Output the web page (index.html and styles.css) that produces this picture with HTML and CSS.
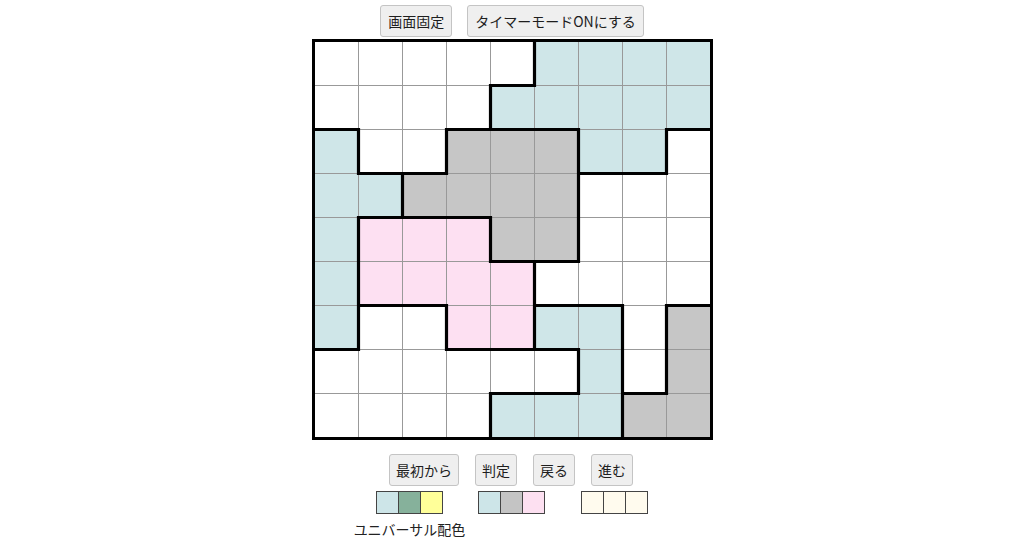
FILE: index.html
```html
<!DOCTYPE html>
<html lang="ja">
<head>
<meta charset="utf-8">
<title>パズル</title>
<link rel="stylesheet" href="styles.css">
</head>
<body>
<div class="page">
  <div class="toolbar top">
    <button class="btn">画面固定</button>
    <button class="btn">タイマーモードONにする</button>
  </div>
  <div class="board">
    <div class="cells">
      <div class="c w"></div><div class="c w"></div><div class="c w"></div><div class="c w"></div><div class="c w"></div><div class="c b"></div><div class="c b"></div><div class="c b"></div><div class="c b"></div>
      <div class="c w"></div><div class="c w"></div><div class="c w"></div><div class="c w"></div><div class="c b"></div><div class="c b"></div><div class="c b"></div><div class="c b"></div><div class="c b"></div>
      <div class="c b"></div><div class="c w"></div><div class="c w"></div><div class="c g"></div><div class="c g"></div><div class="c g"></div><div class="c b"></div><div class="c b"></div><div class="c w"></div>
      <div class="c b"></div><div class="c b"></div><div class="c g"></div><div class="c g"></div><div class="c g"></div><div class="c g"></div><div class="c w"></div><div class="c w"></div><div class="c w"></div>
      <div class="c b"></div><div class="c p"></div><div class="c p"></div><div class="c p"></div><div class="c g"></div><div class="c g"></div><div class="c w"></div><div class="c w"></div><div class="c w"></div>
      <div class="c b"></div><div class="c p"></div><div class="c p"></div><div class="c p"></div><div class="c p"></div><div class="c w"></div><div class="c w"></div><div class="c w"></div><div class="c w"></div>
      <div class="c b"></div><div class="c w"></div><div class="c w"></div><div class="c p"></div><div class="c p"></div><div class="c b"></div><div class="c b"></div><div class="c w"></div><div class="c g"></div>
      <div class="c w"></div><div class="c w"></div><div class="c w"></div><div class="c w"></div><div class="c w"></div><div class="c w"></div><div class="c b"></div><div class="c w"></div><div class="c g"></div>
      <div class="c w"></div><div class="c w"></div><div class="c w"></div><div class="c w"></div><div class="c b"></div><div class="c b"></div><div class="c b"></div><div class="c g"></div><div class="c g"></div>
    </div>
    <svg class="walls" viewBox="0 0 395 395" width="395" height="395" aria-hidden="true">
      <path d="M175.5 43.5H219.5
               M-0.5 87.5H43.5 M131.5 87.5H263.5 M351.5 87.5H395.5
               M43.5 131.5H131.5 M263.5 131.5H351.5
               M43.5 175.5H175.5
               M175.5 219.5H263.5
               M43.5 263.5H131.5 M219.5 263.5H307.5 M351.5 263.5H395.5
               M-0.5 307.5H43.5 M131.5 307.5H263.5
               M175.5 351.5H263.5 M307.5 351.5H351.5
               M43.5 87.5V131.5 M43.5 175.5V307.5
               M87.5 131.5V175.5
               M131.5 87.5V131.5 M131.5 263.5V307.5
               M175.5 43.5V87.5 M175.5 175.5V219.5 M175.5 351.5V395.5
               M219.5 -0.5V43.5 M219.5 219.5V307.5
               M263.5 87.5V219.5 M263.5 307.5V351.5
               M307.5 263.5V395.5
               M351.5 87.5V131.5 M351.5 263.5V351.5"/>
    </svg>
  </div>
  <div class="toolbar bottom">
    <button class="btn">最初から</button>
    <button class="btn">判定</button>
    <button class="btn">戻る</button>
    <button class="btn">進む</button>
  </div>
  <div class="palettes">
    <div class="palette-group first">
      <div class="palette">
        <span class="sw sw-blue"></span><span class="sw sw-green"></span><span class="sw sw-yellow"></span>
      </div>
      <div class="palette-label">ユニバーサル配色</div>
    </div>
    <div class="palette-group second">
      <div class="palette">
        <span class="sw sw-blue"></span><span class="sw sw-gray"></span><span class="sw sw-pink"></span>
      </div>
    </div>
    <div class="palette-group third">
      <div class="palette">
        <span class="sw sw-cream"></span><span class="sw sw-cream"></span><span class="sw sw-cream"></span>
      </div>
    </div>
  </div>
</div>
</body>
</html>
```

FILE: styles.css
```css
* { box-sizing: border-box; }

html, body {
  margin: 0;
  padding: 0;
  background: #ffffff;
}

body {
  font-family: "Noto Sans CJK JP", "Noto Sans", sans-serif;
  color: #222222;
  font-size: 14px;
}

.page {
  display: flex;
  flex-direction: column;
  align-items: center;
  width: 1024px;
  padding-top: 5px;
}

.toolbar {
  display: flex;
  justify-content: center;
  gap: 15px;
}

.toolbar.bottom {
  margin-top: 14px;
  gap: 16px;
  margin-right: 2px;
}

.btn {
  font-family: inherit;
  font-size: 14px;
  line-height: 20px;
  height: 32px;
  padding: 5px 7px;
  color: #1e1e1e;
  background: #efefef;
  border: 1px solid #c4c4c4;
  border-radius: 3px;
}

.toolbar.bottom .btn {
  padding: 5px 6px;
}

.board {
  position: relative;
  width: 401px;
  height: 401px;
  margin-top: 2px;
  border: 3px solid #000000;
}

.cells {
  display: grid;
  grid-template-columns: repeat(9, 43px);
  grid-template-rows: repeat(9, 43px);
  gap: 1px;
  background: #999999;
  width: 395px;
  height: 395px;
}

.c { background: #ffffff; }
.c.b { background: #cfe6e8; }
.c.g { background: #c6c6c6; }
.c.p { background: #fde0f2; }

.walls {
  position: absolute;
  top: 0;
  left: 0;
  overflow: visible;
}

.walls path {
  fill: none;
  stroke: #000000;
  stroke-width: 3.2;
  stroke-linecap: square;
}

.palettes {
  display: flex;
  align-items: flex-start;
  margin-top: 5px;
  margin-right: 22px;
}

.palette-group {
  display: flex;
  flex-direction: column;
  align-items: center;
}

.palette-group.second { margin-left: 13px; }
.palette-group.third { margin-left: 36px; }

.palette {
  display: flex;
  border: 1px solid #444444;
  background: #444444;
  gap: 1px;
}

.sw {
  display: block;
  width: 21px;
  height: 21px;
}

.sw-blue { background: #cde5e8; }
.sw-green { background: #86b19b; }
.sw-yellow { background: #ffff99; }
.sw-gray { background: #c4c4c4; }
.sw-pink { background: #fde0f1; }
.sw-cream { background: #fffbee; }

.palette-label {
  font-size: 14px;
  line-height: 20px;
  margin-top: 5px;
  color: #222222;
  white-space: nowrap;
}
```
